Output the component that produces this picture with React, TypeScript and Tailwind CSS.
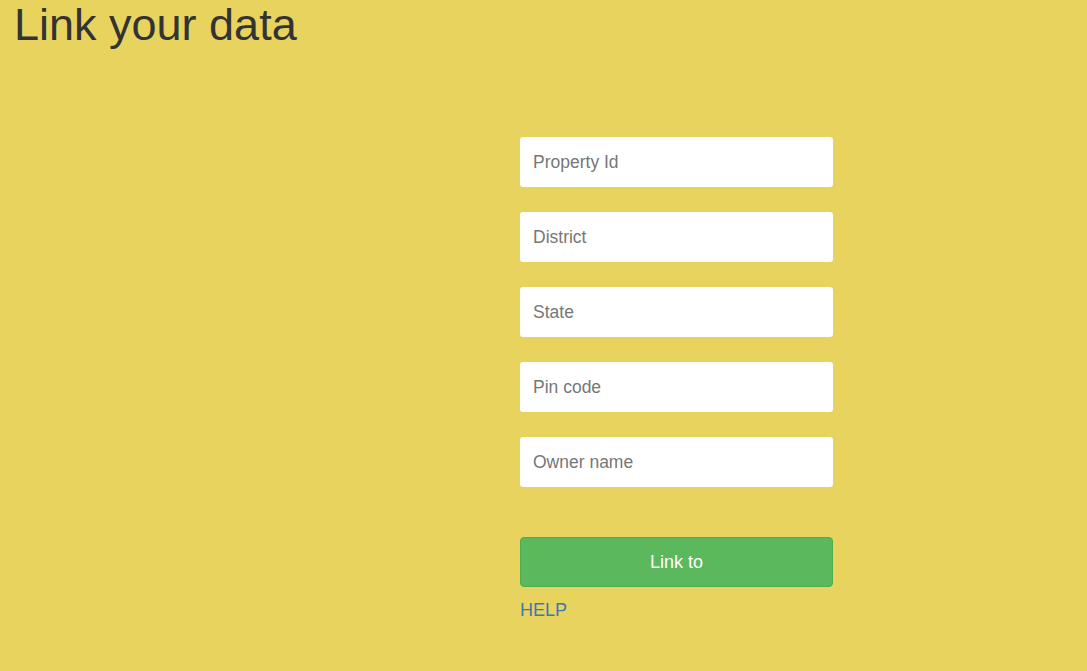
import React from 'react';

const fields = ['Property Id', 'District', 'State', 'Pin code', 'Owner name'];

export default function App() {
  return (
    <div className="min-h-[671px] w-full bg-[#e8d35e] font-['Liberation_Sans',Arial,sans-serif] text-[#333]">
      <h1 className="pl-[14px] text-[45px] leading-[49px] text-[#333]">Link your data</h1>

      <div className="flex justify-start pl-[520px] pt-[88px]">
        <form className="flex w-[313px] flex-col" onSubmit={(e) => e.preventDefault()}>
          {fields.map((f) => (
            <input
              key={f}
              placeholder={f}
              className="mb-[25px] h-[50px] w-full rounded-[3px] bg-white px-[13px] text-[17.5px] text-[#555] placeholder:text-[#777] focus:outline-none"
            />
          ))}

          {/* submit */}
          <button
            type="submit"
            className="mt-[25px] h-[50px] w-full rounded-[4px] border border-[#4cae4c] bg-[#5cb85c] text-[18px] text-white"
          >
            Link to
          </button>
          <a href="#" className="mt-[12px] text-[18px] leading-[1.33] text-[#3a7ab0]">
            HELP
          </a>
        </form>
      </div>
    </div>
  );
}
